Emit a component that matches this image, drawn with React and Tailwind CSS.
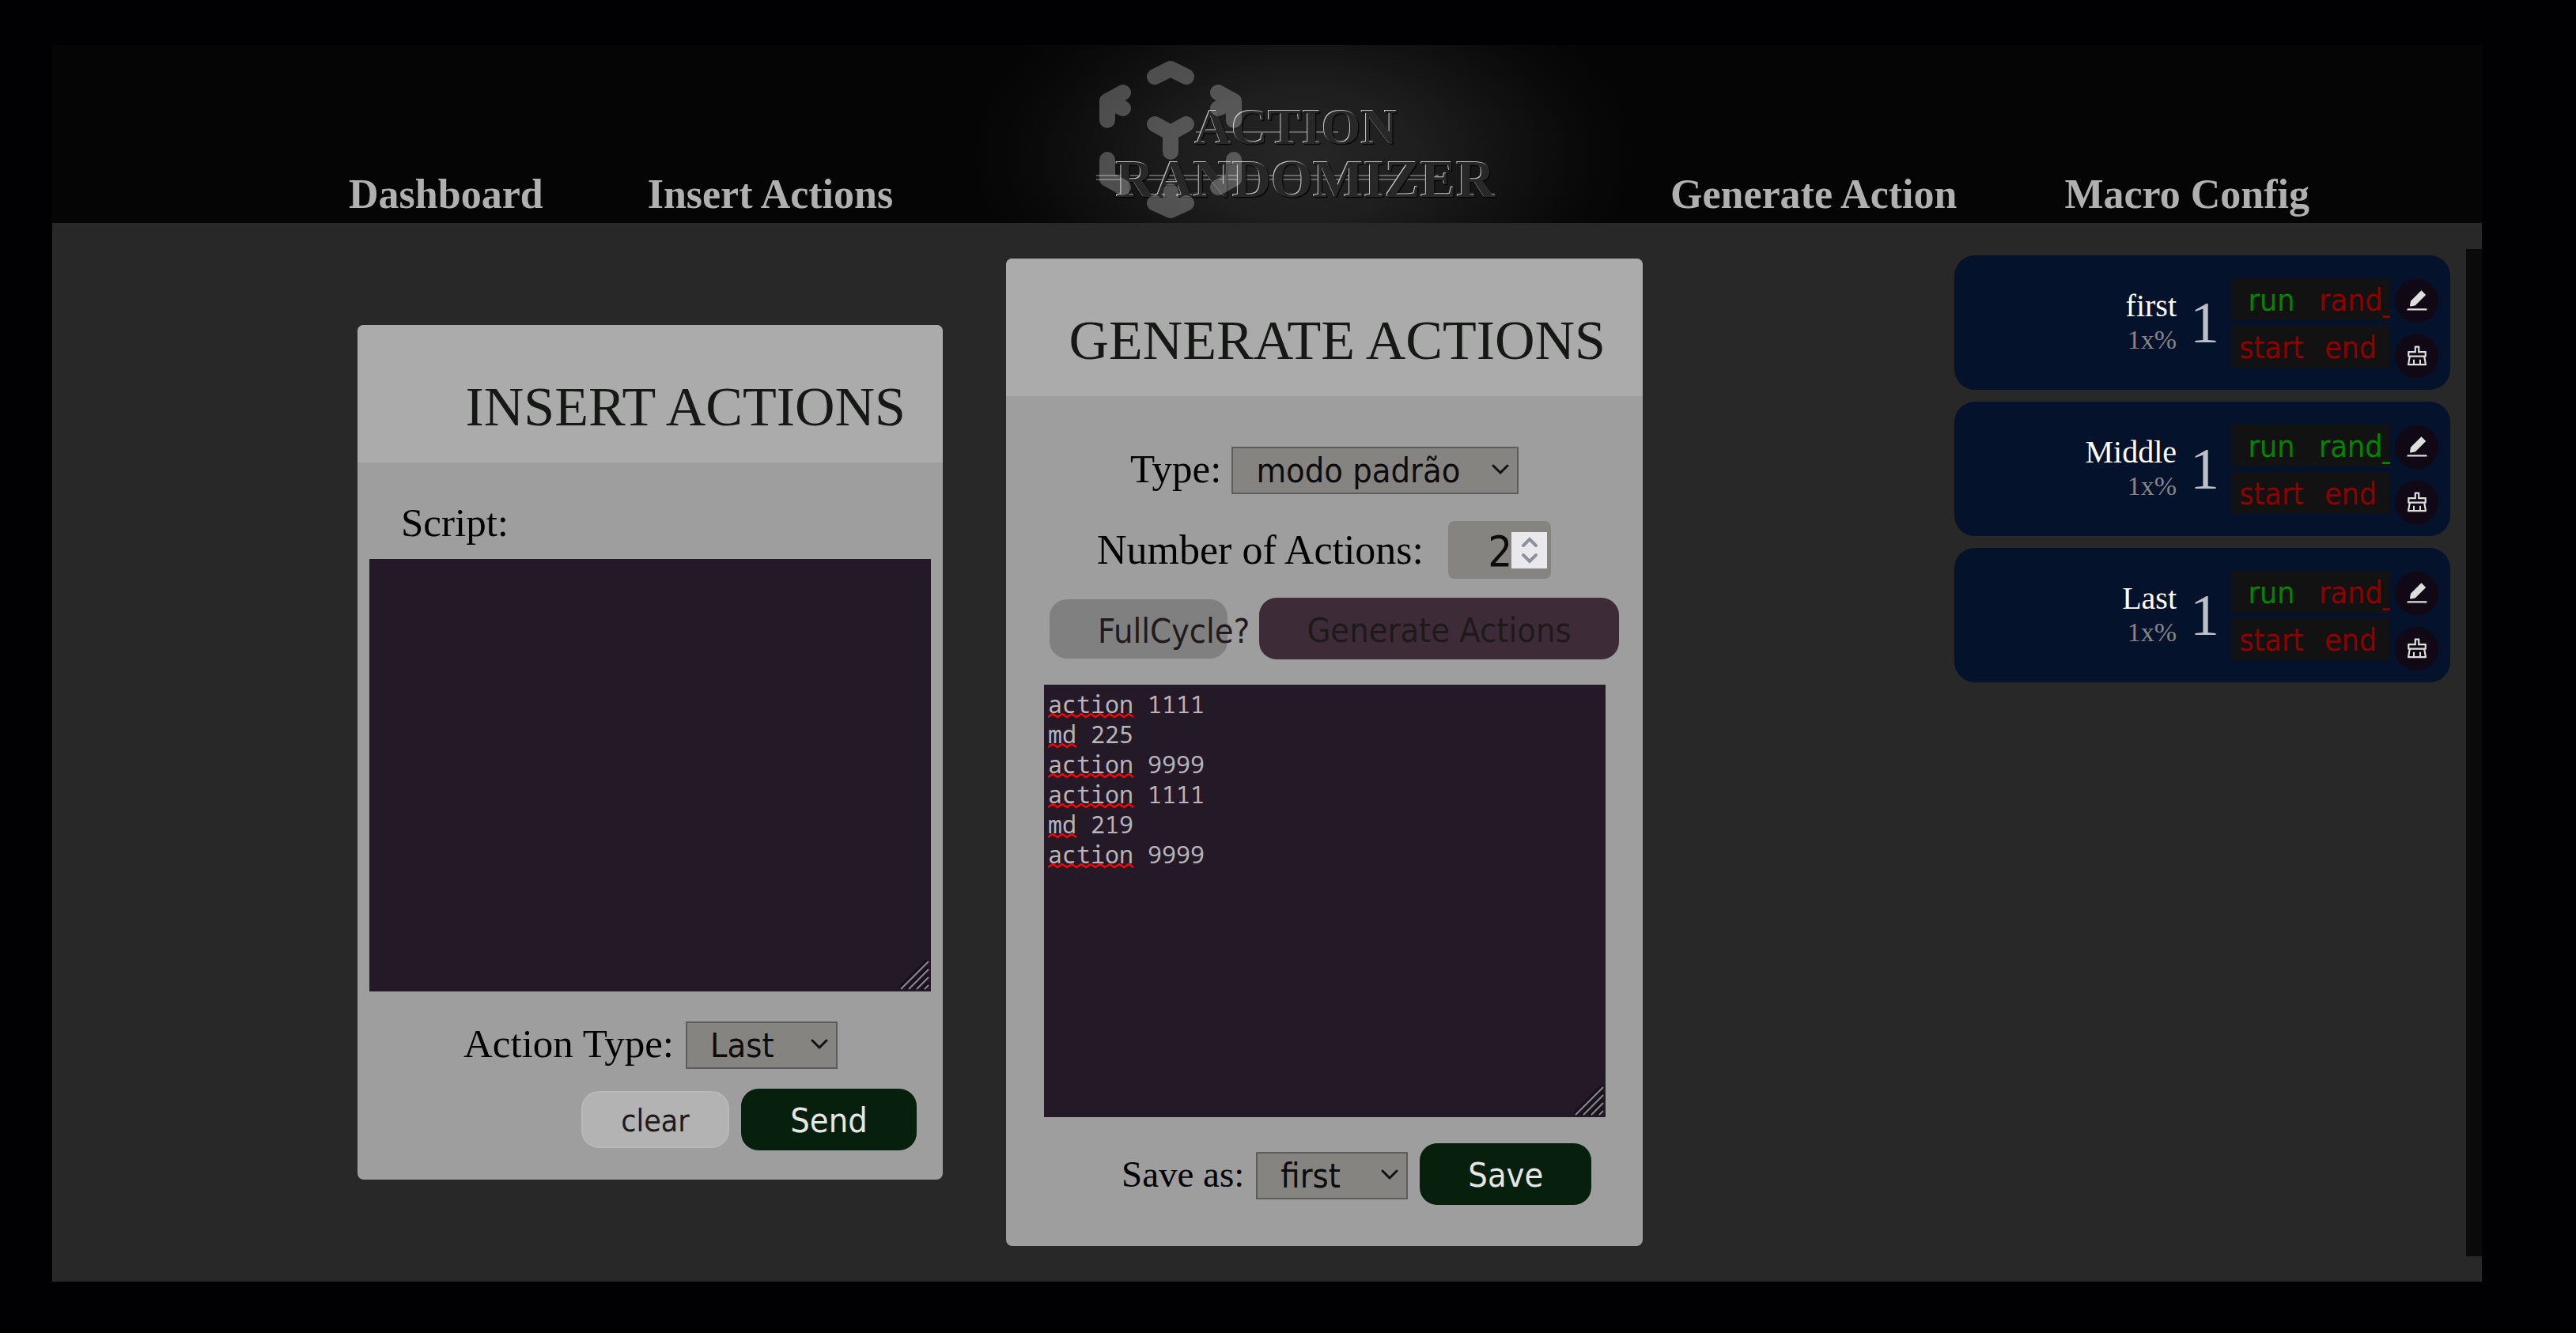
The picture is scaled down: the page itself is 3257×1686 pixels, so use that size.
import { AiFillEdit, AiOutlineClear } from "react-icons/ai";
import { clsx } from "clsx";

const sans = "font-['DejaVu_Sans_Condensed','DejaVu_Sans',sans-serif]";
const macros = [
  { name: "first", rand: false },
  { name: "Middle", rand: true },
  { name: "Last", rand: false },
];

const script = [
  ["action", "1111"],
  ["md", "225"],
  ["action", "9999"],
  ["action", "1111"],
  ["md", "219"],
  ["action", "9999"],
].map((line) => line.join(" ")).join("\n");

function CubeIcon() {
  return (
    <svg viewBox="0 0 180 200" className="absolute -left-[21px] top-5 h-[200px] w-[180px] opacity-25" fill="none" stroke="#fff" strokeWidth="20" strokeLinecap="round" strokeLinejoin="round" aria-hidden="true">
      <path d="M70 20 90 10 110 20M30 40 10 51V75M10 51 30 60M150 40 170 51V75M170 51 150 60M70 80 90 91 110 80M90 91V115M10 125V149L30 160M170 125V149L150 160M90 165V189M70 180 90 189 110 180" />
    </svg>
  );
}

function Logo() {
  return (
    <a href="#home" aria-label="Action Randomizer" className="relative ml-[60px] flex h-full w-[480px] flex-col items-start self-stretch text-[#282828] [text-shadow:-1px_-1px_0_#c4c4c4,1px_1px_1px_#000]">
      <span className="absolute left-[101px] top-[109px] h-0.5 w-[180px] bg-white/30" />
      <span className="absolute -left-[25px] top-[164px] h-[7px] w-[433px] border-y-2 border-white/30" />
      <span className="relative mt-[70px] pl-[100px] text-[64px] leading-[68px]">ACTION</span>
      <span className="relative text-[68px] leading-[62px]">RANDOMIZER</span>
      <CubeIcon />
    </a>
  );
}

function Select({ id, options, className }) {
  return (
    <span className={clsx("relative block h-[60px]", className)}>
      <select id={id} className={clsx("size-full appearance-none border-2 border-[#5c5c5c] bg-[#868480] pl-[29px] text-[43px] leading-[56px] text-[#0c0c0c]", sans)}>
        {options.map((o) => <option key={o}>{o}</option>)}
      </select>
      <svg viewBox="0 0 22 14" className="pointer-events-none absolute right-3 top-6 h-[14px] w-[22px]" fill="none" stroke="#111" strokeWidth="3" strokeLinecap="round" aria-hidden="true"><path d="M2 2 11 11 20 2" /></svg>
    </span>
  );
}

function Grip() {
  return (
    <svg viewBox="0 0 38 38" className="pointer-events-none absolute bottom-0.5 right-0.5 size-[38px]" fill="none" aria-hidden="true">
      <path d="M0 36 36 0" stroke="#15101a" strokeWidth="4" />
      <path d="M2 37 37 2M12 37 37 12M22 37 37 22M32 37 37 32" stroke="#8b858d" strokeWidth="2" />
      <path d="M8 37 37 8M18 37 37 18M28 37 37 28" stroke="#15101a" strokeWidth="3" />
    </svg>
  );
}

function ScriptArea({ id, label, value, children }) {
  return (
    <div className="relative h-[547px] w-[710px]">
      <textarea id={id} aria-label={label} defaultValue={value} spellCheck="false" className="block size-full resize-none bg-[#241926] px-[5px] py-[6px] font-['Noto_Sans_Mono','DejaVu_Sans_Mono',monospace] text-[30px] leading-[38px] text-[#b8b4b9]" />
      {children}
      <Grip />
    </div>
  );
}

function Misspellings() {
  return (
    <div aria-hidden="true" className="pointer-events-none absolute left-[5px] top-[5px]">
      {script.split("\n").map((line, i) => {
        const width = line.indexOf(" ") * 18;
        return (
          <div key={i} className="flex h-[38px] items-end">
            <svg width={width} height="7" fill="none" stroke="#f00" strokeWidth="2.5">
              <path d={"M0 5" + Array.from({ length: Math.ceil(width / 12) }, () => "l6 -4l6 4").join("")} />
            </svg>
          </div>
        );
      })}
    </div>
  );
}

function Card({ title, className, children }) {
  return (
    <section className={clsx("overflow-hidden rounded-lg bg-[#9e9e9e] text-black", className)}>
      <header className="flex h-[174px] items-center justify-end bg-[#ababab] pr-[47px] pt-[34px]">
        <h2 className="whitespace-nowrap text-[70px] leading-[80px] text-[#161816]">{title}</h2>
      </header>
      {children}
    </section>
  );
}

function Flag({ on, clip, children }) {
  return (
    <button type="button" className={clsx("h-full w-[100px] overflow-hidden", sans, on ? "text-[#008500]" : "text-[#8c0000]", clip && "pl-[10px] text-left")}>
      {children}
    </button>
  );
}

function Macro({ name, rand }) {
  return (
    <li className="flex h-[170px] items-center justify-end rounded-[26px] bg-[#04122b] pr-[15px]">
      <div className="text-right">
        <div className="text-[40px] leading-[44px] text-white">{name}</div>
        <div className="text-[34px] leading-[42px] text-[#858585]">1x%</div>
      </div>
      <div className="ml-[17px] w-[36px] text-center text-[74px] leading-[80px] text-[#bcbfc6]">1</div>
      <div className="ml-[17px] flex flex-col gap-[7px] text-[39px] leading-[55px]">
        <div className="flex h-[53px] bg-[#121212]"><Flag on>run</Flag><Flag on={rand} clip>rand_</Flag></div>
        <div className="flex h-[53px] bg-[#121212]"><Flag>start</Flag><Flag>end</Flag></div>
      </div>
      <div className="ml-[6px] mt-[14px] flex flex-col gap-[15px] text-[#dedede]">
        <button type="button" aria-label={`Edit ${name}`} className="flex size-[55px] items-center justify-center rounded-full bg-[#110815]"><AiFillEdit size={32} /></button>
        <button type="button" aria-label={`Clear ${name}`} className="flex size-[55px] items-center justify-center rounded-full bg-[#110815]"><AiOutlineClear size={32} /></button>
      </div>
    </li>
  );
}

export default function App() {
  return (
    <div className="min-h-screen bg-[#010103] pb-[65px] pl-[66px] pr-[119px] pt-[57px] font-['Liberation_Serif',serif]">
      <div className="min-h-[1564px] bg-[#282828]">
        <header className="flex h-[225px] items-end justify-between bg-[#050505] bg-[radial-gradient(420px_240px_at_51.5%_62%,#262626,#1e1e1e_35%,#121212_62%,#090909_84%,#050505)] pl-[375px] pr-[218px] text-[52px] font-bold text-[#b0b0b0]">
          <nav className="flex gap-[132px] pb-2 leading-[56px]"><a href="#dashboard">Dashboard</a><a href="#insert">Insert Actions</a></nav>
          <Logo />
          <nav className="flex gap-[136px] pb-2 leading-[56px]"><a href="#generate">Generate Action</a><a href="#macro">Macro Config</a></nav>
        </header>
        <main className="flex items-start">
          <Card title="INSERT ACTIONS" className="ml-[386px] mt-[129px] w-[740px]">
            <div className="flex flex-col px-[15px] pb-[37px]">
              <label htmlFor="script" className="pl-10 pt-[46px] text-[51px] leading-[60px]">Script:</label>
              <div className="mt-4"><ScriptArea id="script" value="" /></div>
              <div className="mt-9 flex items-center gap-[15px] pl-[119px] text-[51px] leading-[60px]">
                <label htmlFor="kind">Action Type:</label>
                <Select id="kind" options={["Last", "Middle", "first"]} className="w-[192px]" />
              </div>
              <div className="mt-[27px] flex items-center justify-end gap-[15px] pr-[18px]">
                <button type="button" className={clsx("h-[72px] w-[187px] rounded-[22px] border-2 border-[#b8b8b8] bg-[#b3b3b3] pt-1 text-[39px] leading-[60px] text-[#201a1c]", sans)}>clear</button>
                <button type="button" className={clsx("h-[78px] w-[222px] rounded-[22px] bg-[#071f0d] pt-0.5 text-[43px] text-[#e6e6e6]", sans)}>Send</button>
              </div>
            </div>
          </Card>
          <Card title="GENERATE ACTIONS" className="ml-20 mt-[45px] w-[805px]">
            <div className="flex flex-col pb-[52px] text-[51px] leading-[60px]">
              <div className="mt-[62px] flex gap-[13px] pl-[157px]">
                <label htmlFor="mode">Type:</label>
                <Select id="mode" options={["modo padrão"]} className="w-[363px]" />
              </div>
              <div className="mt-9 flex items-center gap-[31px] pl-[115px]">
                <label htmlFor="count" className="text-[52px]">Number of Actions:</label>
                <span className="relative block h-[73px] w-[130px]">
                  <input id="count" type="number" defaultValue="2" className={clsx("size-full rounded-lg bg-[#868480] pr-[49px] pt-1 text-right text-[54px] text-[#0c0c0c] [appearance:textfield] [&::-webkit-inner-spin-button]:appearance-none", sans)} />
                  <svg viewBox="0 0 45 46" className="pointer-events-none absolute right-[5px] top-[14px] h-[46px] w-[45px] bg-[#e9e9ed]" fill="none" stroke="#8f8f9d" strokeWidth="4" strokeLinecap="round" aria-hidden="true"><path d="M15 17 23 9 31 17M15 29 23 37 31 29" /></svg>
                </span>
              </div>
              <div className="mt-6 flex items-center gap-10 pl-[55px]">
                <button type="button" className={clsx("h-[75px] w-[225px] whitespace-nowrap rounded-[22px] bg-[#808080] pl-[61px] pt-1.5 text-left text-[43px] text-[#201a1c]", sans)}>FullCycle?</button>
                <button type="button" className={clsx("h-[78px] w-[455px] whitespace-nowrap rounded-[22px] bg-[#3d2c38] pt-1 text-[43px] text-[#1e1a1a]", sans)}>Generate Actions</button>
              </div>
              <div className="mt-8 pl-12"><ScriptArea id="output" label="Generated actions" value={script}><Misspellings /></ScriptArea></div>
              <div className="mt-[33px] flex items-center gap-[15px] pl-[146px]">
                <label htmlFor="save" className="text-[47px]">Save as:</label>
                <Select id="save" options={["first", "Middle", "Last"]} className="w-[192px]" />
                <button type="button" className={clsx("h-[78px] w-[217px] rounded-[22px] bg-[#071f0d] pt-0.5 text-[43px] text-[#e6e6e6]", sans)}>Save</button>
              </div>
            </div>
          </Card>
          <aside className="ml-auto mt-[33px] flex h-[1274px] w-[667px] border-r-[20px] border-[#0a0a0a] pr-5 pt-2">
            <ul className="flex flex-1 flex-col gap-[15px]">{macros.map((m) => <Macro key={m.name} {...m} />)}</ul>
          </aside>
        </main>
      </div>
    </div>
  );
}
